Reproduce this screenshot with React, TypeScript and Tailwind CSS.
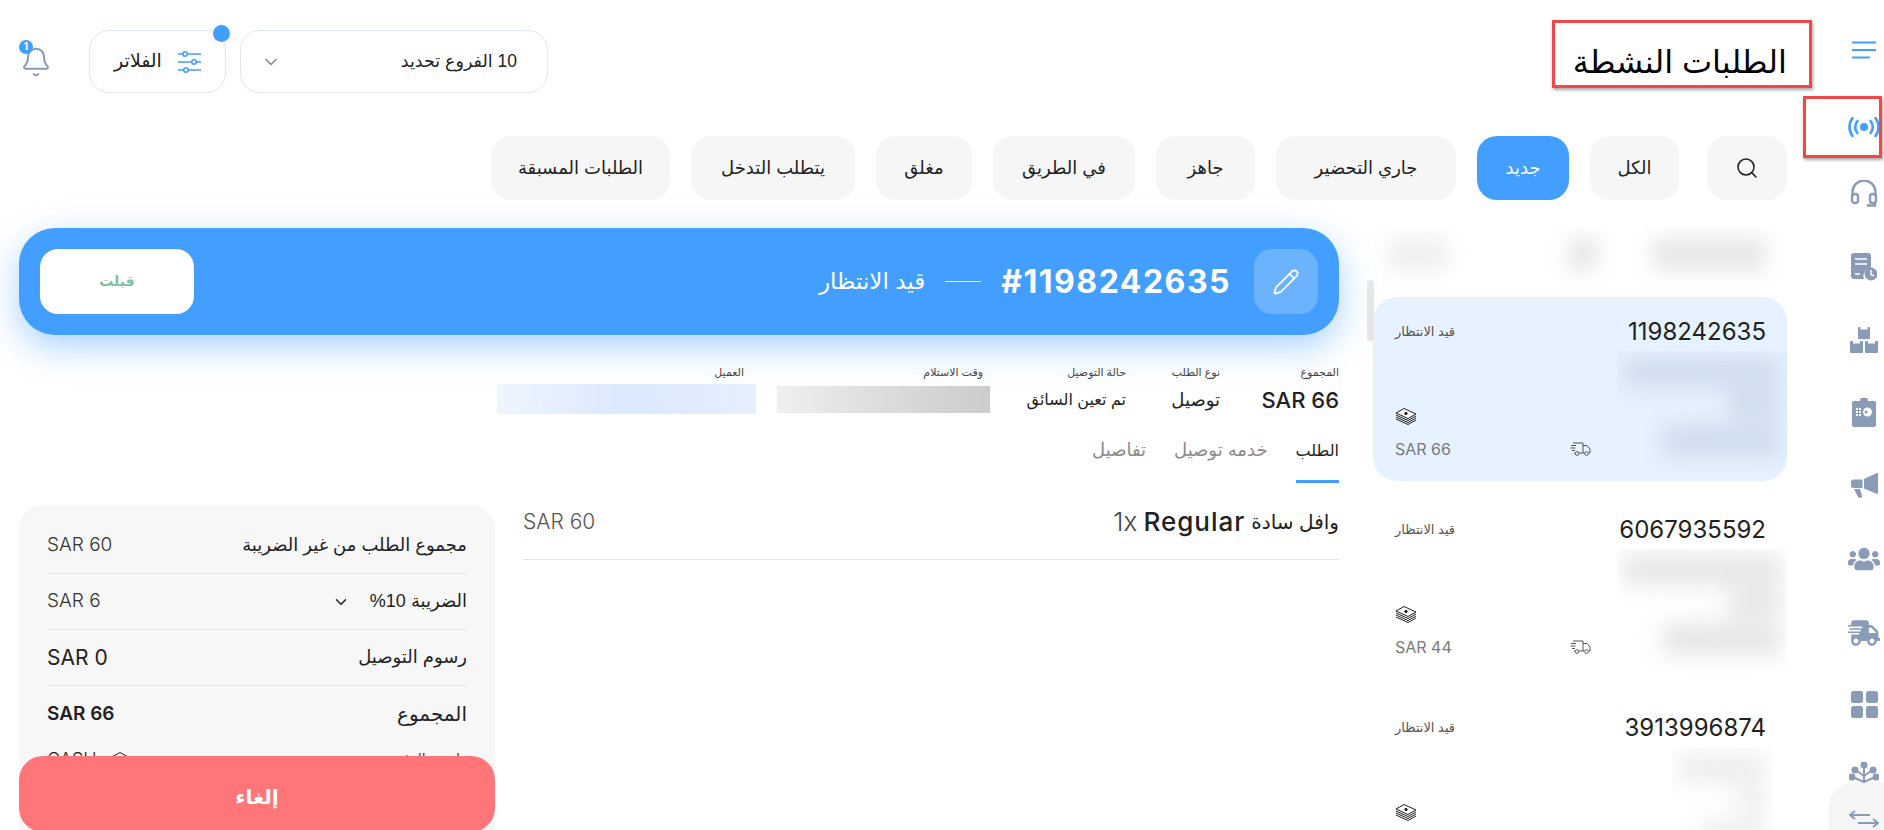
import React from "react";
import { ChevronDown, Search, Pencil, Bell } from "lucide-react";
import { FaUsers, FaShippingFast } from "react-icons/fa";

const inter = { fontFamily: "Inter, sans-serif" };

const tabs = [
  { label: "الكل", w: "w-[89px]" },
  { label: "جديد", w: "w-[92px]", active: true },
  { label: "جاري التحضير", w: "w-[180px]" },
  { label: "جاهز", w: "w-[99px]" },
  { label: "في الطريق", w: "w-[142px]" },
  { label: "مغلق", w: "w-[96px]" },
  { label: "يتطلب التدخل", w: "w-[164px]" },
  { label: "الطلبات المسبقة", w: "w-[179px]" },
];

const MoneyIcon = () => (
  <svg width="22" height="18" viewBox="0 0 22 18" fill="none" stroke="#222" strokeWidth="1">
    <path d="M1 6 9 1.5 21 7 13 11.5Z" fill="#fff" />
    <circle cx="11" cy="6.5" r="1.2" fill="#222" />
    <path d="M1 8 13 13.5 21 9M1 10 13 15.5 21 11M1 12 13 17.5 21 13" />
  </svg>
);

const TruckIcon = () => (
  <svg width="21" height="14" viewBox="0 0 21 14" fill="none" stroke="#555" strokeWidth="1">
    <path d="M3 1h10v10H9M13 3.5h4l3 3.5v4h-1.5M13 11h1.5M4 11h1M1 3.5h5M0.5 6h5M2 8.5h3" />
    <circle cx="7" cy="11.5" r="1.8" />
    <circle cx="16.5" cy="11.5" r="1.8" />
  </svg>
);

function OrderCard({ id, amount, active, noFooter, blurs }: { id: string; amount: string; active?: boolean; noFooter?: boolean; blurs: string }) {
  return (
    <div className={`relative h-[184px] shrink-0 rounded-[24px] pr-[21px] pl-[22px] pt-[20px] ${active ? "bg-[#e6f2ff]" : ""}`}>
      <div className="flex items-center justify-between">
        <span className="text-[24px] leading-[30px] text-[#222]" style={inter}>{id}</span>
        <span className="text-[13px] text-[#555]">قيد الانتظار</span>
      </div>
      <div className="mt-[4px] flex justify-between">
        <div className={`h-[124px] overflow-hidden ${noFooter ? "w-[100px] -mr-[6px]" : "w-[170px] -mr-[21px]"}`}>
          <div className="h-full w-full p-[6px] blur-[11px]">
            <div className={`h-[30px] w-full ${blurs}`}></div>
            <div className={`mt-[4px] h-[28px] w-1/3 ${blurs}`}></div>
            <div className={`mt-[6px] h-[32px] w-3/4 ${blurs}`}></div>
          </div>
        </div>
        <div className="flex flex-col items-start pt-[56px]" dir="ltr">
          <MoneyIcon />
        </div>
      </div>
      {!noFooter && (
        <div className="absolute bottom-[20px] left-[22px] flex w-[196px] items-center justify-between" dir="ltr">
          <span className="text-[16px] font-normal text-[#7a7a7a]" style={inter}>{amount}</span>
          <TruckIcon />
        </div>
      )}
    </div>
  );
}

function SummaryRow({ label, value, children, valueCls }: { label: string; value: string; children?: React.ReactNode; valueCls: string }) {
  return (
    <div className="flex h-[56px] items-center justify-between border-b border-[#dbe6f2]">
      <span className="flex items-center gap-[20px] text-[18px] text-[#222]">{label}{children}</span>
      <span className={valueCls} style={inter} dir="ltr">{value}</span>
    </div>
  );
}

export default function App() {
  return (
    <div dir="rtl" className="relative flex h-screen w-full overflow-hidden bg-white text-[#222]" style={{ fontFamily: '"Liberation Sans", "DejaVu Sans", sans-serif' }}>
      {/* sidebar */}
      <aside className="relative flex w-[40px] shrink-0 flex-col items-center text-[#8a9bb8]">
        <svg className="mt-[41px]" width="26" height="18" viewBox="0 0 26 18" fill="none" stroke="#429eff" strokeWidth="2">
          <path d="M1 1.5h24M1 9h24M1 16.5h18" />
        </svg>
        <svg className="mt-[57px]" width="32" height="22" viewBox="0 0 32 22" fill="none" stroke="#429eff" strokeWidth="2.6" strokeLinecap="round">
          <circle cx="16" cy="11" r="4" fill="#429eff" stroke="none" />
          <path d="M9.5 5a9 9 0 0 0 0 12M22.5 5a9 9 0 0 1 0 12M4.5 2a15 15 0 0 0 0 18M27.5 2a15 15 0 0 1 0 18" />
        </svg>
        <svg className="mt-[42px]" width="28" height="28" viewBox="0 0 28 28" fill="none" stroke="#8a9bb8" strokeWidth="2.4">
          <path d="M2.5 16v-4a11.5 11.5 0 0 1 23 0v4" />
          <rect x="2" y="14" width="6" height="9" rx="2.5" />
          <rect x="20" y="14" width="6" height="9" rx="2.5" />
          <path d="M25 23v2.5h-8" />
        </svg>
        <svg className="mt-[45px]" width="26" height="28" viewBox="0 0 26 28">
          <path d="M3 0h14a3 3 0 0 1 3 3v12a8 8 0 0 0-7 11H3a3 3 0 0 1-3-3V3a3 3 0 0 1 3-3Z" fill="#8a9bb8" />
          <path d="M4 6h12M4 11h12M4 21h5" stroke="#fff" strokeWidth="1.6" />
          <circle cx="20" cy="21" r="6.5" fill="#8a9bb8" />
          <path d="M20 17v4.5l3 1.5" stroke="#fff" strokeWidth="1.4" fill="none" />
        </svg>
        <svg className="mt-[46px]" width="28" height="26" viewBox="0 0 28 26" fill="#8a9bb8">
          <path d="M8 1a1 1 0 0 1 1-1h1.5v2.500h7V0H19a1 1 0 0 1 1 1v10a1 1 0 0 1-1 1H9a1 1 0 0 1-1-1Z" />
          <path d="M0 15a1 1 0 0 1 1-1h2v2.500h7V14h2a1 1 0 0 1 1 1v10a1 1 0 0 1-1 1H1a1 1 0 0 1-1-1Z" />
          <path d="M15 15a1 1 0 0 1 1-1h2v2.500h7V14h2a1 1 0 0 1 1 1v10a1 1 0 0 1-1 1H16a1 1 0 0 1-1-1Z" />
        </svg>
        <svg className="mt-[45px]" width="24" height="29" viewBox="0 0 24 29">
          <path d="M2 3h6a4 4 0 0 1 8 0h6a2 2 0 0 1 2 2v22a2 2 0 0 1-2 2H2a2 2 0 0 1-2-2V5a2 2 0 0 1 2-2Z" fill="#8a9bb8" />
          <path d="M4 10h2v2H4zM7 10h2v2H7zM4 13h2v2H4zM7 13h2v2H7zM4 16h2v2H4zM7 16h2v2H7z" fill="#fff" />
          <circle cx="15.500" cy="14" r="4.500" fill="#fff" />
          <circle cx="14" cy="14" r="1.500" fill="#8a9bb8" />
        </svg>
        <svg className="mt-[46px]" width="27" height="25" viewBox="0 0 27 25" fill="#8a9bb8">
          <path d="M26 0a1 1 0 0 1 1 1v19a1 1 0 0 1-1 1L13 15.500V6Z" />
          <path d="M11.500 6.500V15H2.500A2.500 2.500 0 0 1 0 12.500v-3.500A2.500 2.500 0 0 1 2.500 6.500Z" />
          <path d="M3 16h6l2 7a1.400 1.400 0 0 1-1 1.800h-1.500a1.400 1.400 0 0 1-1.500-1Z" />
        </svg>
        <FaUsers className="mt-[45px] h-[32px] w-[32px]" />
        <FaShippingFast className="mt-[44px] h-[28px] w-[32px]" />
        <svg className="mt-[44px]" width="27" height="27" viewBox="0 0 27 27" fill="#8a9bb8">
          <rect width="12" height="12" rx="2.500" />
          <rect x="15" width="12" height="12" rx="2.500" />
          <rect y="15" width="12" height="12" rx="2.500" />
          <rect x="15" y="15" width="12" height="12" rx="2.500" />
        </svg>
        <svg className="mt-[44px]" width="30" height="26" viewBox="0 0 30 26" fill="none" stroke="#8a9bb8" strokeWidth="2">
          <path d="M15 4v18M15 14 8 9M15 14l7-5M15 20 6 16M15 20l9-4" />
          <circle cx="15" cy="3" r="2.500" fill="#8a9bb8" />
          <circle cx="6" cy="8" r="2.500" fill="#8a9bb8" />
          <circle cx="24" cy="8" r="2.500" fill="#8a9bb8" />
          <circle cx="3" cy="15" r="2.500" fill="#8a9bb8" />
          <circle cx="27" cy="15" r="2.500" fill="#8a9bb8" />
        </svg>
        <div className="absolute bottom-0 right-0 left-[-15px] flex h-[47px] justify-start rounded-tl-[24px] bg-[#f5f5f5]">
          <svg className="mr-[5px] mt-[27px]" width="30" height="19" viewBox="0 0 30 19" fill="none" stroke="#8a9bb8" strokeWidth="2">
            <path d="M1 5h20M6 1 1 5l5 4M29 13H9M24 9l5 4-5 4" />
          </svg>
        </div>
      </aside>

      {/* main */}
      <main className="flex min-w-0 flex-1 flex-col pr-[57px] pl-[19px]">
        <header className="mt-[30px] flex h-[63px] shrink-0 items-center justify-between">
          <h1 className="text-[32px] font-normal leading-none text-black">الطلبات النشطة</h1>
          <div className="flex items-center">
            <button className="flex h-[63px] w-[308px] items-center justify-between rounded-[20px] border border-[#dfe7f1] pr-[30px] pl-[20px] text-[17.500px]">
              <span>10 الفروع تحديد</span>
              <ChevronDown className="h-[20px] w-[20px] text-[#7f8a9c]" />
            </button>
            <button className="relative mr-[14px] flex h-[63px] w-[137px] items-center justify-center gap-[15px] rounded-[20px] border border-[#dfe7f1] text-[19px]">
              <svg width="24" height="24" viewBox="0 0 24 24" fill="none" stroke="#429eff" strokeWidth="1.500">
                <path d="M1 4h23M1 12h23M1 20h23" />
                <circle cx="8" cy="4" r="2.200" fill="#fff" />
                <circle cx="17" cy="12" r="2.200" fill="#fff" />
                <circle cx="9" cy="20" r="2.200" fill="#fff" />
              </svg>
              <span>الفلاتر</span>
              <span className="absolute -top-[6px] -right-[5px] h-[17px] w-[17px] rounded-full bg-[#429eff]"></span>
            </button>
            <div className="relative mr-[37px] ml-[1px]">
              <Bell className="h-[32px] w-[32px] text-[#8a9bb8]" strokeWidth={1.500} />
              <span className="absolute -top-[6px] -left-[1px] flex h-[14px] w-[14px] items-center justify-center rounded-full bg-[#429eff] text-[10px] font-bold text-white" style={inter}>1</span>
            </div>
          </div>
        </header>

        <nav className="mt-[43px] flex h-[64px] shrink-0 gap-[21px]">
          <button className="ml-[7px] flex w-[80px] items-center justify-center rounded-[20px] bg-[#f6f6f6]">
            <Search className="h-[24px] w-[24px] text-[#222]" strokeWidth={1.600} />
          </button>
          {tabs.map((t) => (
            <button key={t.label} className={`${t.w} rounded-[20px] text-[18px] ${t.active ? "bg-[#429eff] text-white" : "bg-[#f6f6f6] text-[#222]"}`}>
              {t.label}
            </button>
          ))}
        </nav>

        <div className="mt-[28px] flex min-h-0 flex-1">
          {/* order list */}
          <section className="relative flex w-[414px] shrink-0 flex-col gap-[14px] overflow-hidden">
            <div className="-mt-[129px] flex flex-col gap-[14px]">
              <div className="relative h-[184px] shrink-0">
                <div className="absolute bottom-[12px] right-[21px] flex blur-[10px]">
                  <div className="h-[34px] w-[114px] bg-[#e8e8e8]"></div>
                  <div className="mr-[54px] h-[34px] w-[30px] bg-[#e8e8e8]"></div>
                  <div className="mr-[120px] h-[34px] w-[60px] bg-[#f0f0f0]"></div>
                </div>
              </div>
              <OrderCard id="1198242635" amount="SAR 66" active blurs="bg-[#cfdcec]" />
              <OrderCard id="6067935592" amount="SAR 44" blurs="bg-[#e6e6e6]" />
              <OrderCard id="3913996874" amount="SAR 44" noFooter blurs="bg-[#eeeeee]" />
            </div>
          </section>
          <div className="relative w-[34px] shrink-0">
            <div className="absolute right-[-1px] top-[52px] h-[61px] w-[7px] rounded-full bg-[#e6e6e6]"></div>
          </div>

          {/* order detail */}
          <section className="flex min-w-0 flex-1 flex-col">
            <div className="flex h-[107px] shrink-0 items-center justify-between rounded-[36px] bg-[#429eff] pr-[21px] pl-[21px] shadow-[0_12px_35px_rgba(66,158,255,0.45)]">
              <div className="flex items-center">
                <div className="flex h-[65px] w-[64px] items-center justify-center rounded-[18px] bg-[#6bb3ff]">
                  <Pencil className="h-[28px] w-[28px] text-white" strokeWidth={1.500} />
                </div>
                <span className="mr-[23px] text-[32px] font-bold tracking-[1.500px] text-white" style={inter} dir="ltr">#1198242635</span>
                <span className="mx-[20px] h-px w-[36px] bg-white"></span>
                <span className="text-[23px] text-white">قيد الانتظار</span>
              </div>
              <button className="h-[65px] w-[154px] rounded-[18px] bg-white text-[14px] font-bold text-[#7cc0a0]">قبلت</button>
            </div>

            <div className="mt-[30px] flex shrink-0">
              <div className="w-[119px]">
                <div className="text-[11px] leading-[14px] text-[#444]">المجموع</div>
                <div className="mt-[6px] text-right text-[22px] font-medium leading-[30px]" style={inter}>SAR 66</div>
              </div>
              <div className="w-[94px]">
                <div className="text-[11px] leading-[14px] text-[#444]">نوع الطلب</div>
                <div className="mt-[6px] text-[18px] leading-[30px]">توصيل</div>
              </div>
              <div className="w-[143px]">
                <div className="text-[11px] leading-[14px] text-[#444]">حالة التوصيل</div>
                <div className="mt-[6px] text-[16px] leading-[30px]">تم تعين السائق</div>
              </div>
              <div className="w-[239px]">
                <div className="text-[11px] leading-[14px] text-[#444]">وقت الاستلام</div>
                <div className="-mr-[7px] mt-[7px] h-[27px] w-[213px] bg-gradient-to-r from-[#f0f0f0] via-[#dcdcdc] to-[#cccccc]"></div>
              </div>
              <div>
                <div className="text-[11px] leading-[14px] text-[#444]">العميل</div>
                <div className="-mr-[12px] mt-[5px] h-[30px] w-[259px] bg-gradient-to-r from-[#eef5fe] via-[#dbe9fd] to-[#e6f0fe]"></div>
              </div>
            </div>

            <div className="mt-[21px] flex shrink-0 gap-[28px] text-[18px] leading-[29px]">
              <span className="border-b-[3px] border-[#429eff] pb-[15px] text-[16px] text-[#222]">الطلب</span>
              <span className="text-[#8a8a8a]">خدمه توصيل</span>
              <span className="text-[#8a8a8a]">تفاصيل</span>
            </div>

            <div className="mt-[22px] flex min-h-0 flex-1 gap-[28px]">
              <div className="min-w-0 flex-1">
                <div className="flex h-[55px] items-start justify-between border-b border-[#dbe6f2]">
                  <span className="flex items-center gap-[6px] text-[20px] leading-[34px]">
                    <span>وافل سادة</span>
                    <span className="text-[26px] font-medium tracking-[1px]" style={inter}>Regular</span>
                    <span className="text-[26px] font-light text-[#444]" style={inter} dir="ltr">1x</span>
                  </span>
                  <span className="text-[21px] font-light leading-[34px] text-[#555]" style={inter} dir="ltr">SAR 60</span>
                </div>
              </div>

              <div className="relative w-[476px] shrink-0">
                <div className="h-full overflow-hidden rounded-t-[24px] bg-[#f7f7f7] px-[28px] pt-[13px]">
                  <SummaryRow label="مجموع الطلب من غير الضريبة" value="SAR 60" valueCls="text-[19px] font-light text-[#333]" />
                  <SummaryRow label="الضريبة 10%" value="SAR 6" valueCls="text-[19px] font-light text-[#333]">
                    <ChevronDown className="h-[18px] w-[18px]" />
                  </SummaryRow>
                  <SummaryRow label="رسوم التوصيل" value="SAR 0" valueCls="text-[21px] text-[#222]" />
                  <div className="flex h-[56px] items-center justify-between">
                    <span className="text-[20px]">المجموع</span>
                    <span className="text-[19px] font-semibold" style={inter} dir="ltr">SAR 66</span>
                  </div>
                  <div className="mt-[4px] flex items-center justify-between">
                    <span className="text-[14px] text-[#444]">طريقة الدفع</span>
                    <span className="flex items-center gap-[14px]" dir="ltr">
                      <span className="text-[18px] font-light" style={inter}>CASH</span>
                      <svg width="20" height="18" viewBox="0 0 20 18" fill="none" stroke="#222" strokeWidth="1">
                        <path d="M1 6 9 1.500 19 7 11 11.500Z" />
                        <circle cx="10" cy="6.500" r="1" fill="#222" />
                      </svg>
                    </span>
                  </div>
                </div>
                <button className="absolute bottom-[-2px] left-0 right-0 h-[76px] rounded-[24px] bg-[#ff7578] pt-[6px] text-[20px] font-bold text-white">إلغاء</button>
              </div>
            </div>
          </section>
        </div>
      </main>

      {/* red annotation boxes */}
      <div className="pointer-events-none absolute left-[1552px] top-[20px] h-[68px] w-[260px] border-[3px] border-[#f04848] shadow-[1px_2px_3px_rgba(0,0,0,0.35)]"></div>
      <div className="pointer-events-none absolute left-[1803px] top-[96px] h-[62px] w-[79px] border-[3px] border-[#f04848] shadow-[1px_2px_3px_rgba(0,0,0,0.35)]"></div>
    </div>
  );
}
